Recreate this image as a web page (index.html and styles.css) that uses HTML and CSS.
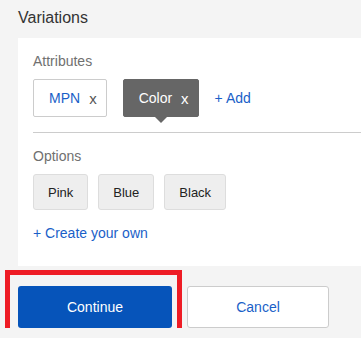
FILE: index.html
```html
<!DOCTYPE html>
<html lang="en">
    <head>
        <meta charset="UTF-8" />
        <meta name="viewport" content="width=device-width, initial-scale=1.0" />
        <title>Variations</title>
        <link rel="stylesheet" href="styles.css">
    </head>
    <body>
        <div id="title">Variations</div>
        <div id="panel">
            <div class="label">Attributes</div>
            <div class="chip-row">
                <div class="attr">MPN <span class="remove">x</span></div>
                <div class="attr active">Color <span class="remove">x</span></div>
                <a class="link" href="#">+ Add</a>
            </div>
            <div class="divider"></div>
            <div class="label">Options</div>
            <div class="chip-row options">
                <div class="option">Pink</div>
                <div class="option">Blue</div>
                <div class="option">Black</div>
            </div>
            <a class="link create" href="#">+ Create your own</a>
        </div>
        <div id="footer">
            <button id="continue">Continue</button>
            <button id="cancel">Cancel</button>
            <div id="highlight"></div>
        </div>
    </body>
</html>
```

FILE: styles.css
```css
body {
    margin: 0;
    background-color: #f4f4f4;
    font-family: "Liberation Sans", Arial, sans-serif;
    color: #333;
}
#title {
    padding: 8px 18px 10px;
    font-size: 16px;
    line-height: 20px;
}
#panel {
    margin-left: 18px;
    background-color: white;
    padding: 15px 0 24px 15px;
}
.label {
    font-size: 14px;
    line-height: 16px;
    color: #707070;
    margin-bottom: 10px;
}
.chip-row {
    display: flex;
    align-items: center;
    gap: 16px;
}
.chip-row.options {
    gap: 10px;
}
.attr {
    position: relative;
    box-sizing: border-box;
    height: 38px;
    display: flex;
    align-items: center;
    padding: 0 9px 0 15px;
    border: 1px solid #ccc;
    border-radius: 2px;
    background-color: #fff;
    color: #1a5fc8;
    font-size: 14px;
}
.attr .remove {
    color: #555;
    margin-left: 9px;
    font-size: 15px;
}
.attr.active {
    background-color: #666;
    border-color: #666;
    color: white;
}
.attr.active .remove {
    color: white;
}
.attr.active::after {
    content: "";
    position: absolute;
    left: 50%;
    bottom: -7px;
    margin-left: -6px;
    border-left: 6px solid transparent;
    border-right: 6px solid transparent;
    border-top: 6px solid #666;
}
.link {
    color: #1a5fc8;
    font-size: 14px;
    text-decoration: none;
}
.divider {
    height: 1px;
    background-color: #ccc;
    margin: 15px 0 15px;
}
.option {
    box-sizing: border-box;
    height: 36px;
    display: flex;
    align-items: center;
    padding: 0 14px;
    background-color: #eee;
    border: 1px solid #ddd;
    border-radius: 3px;
    font-size: 13px;
    color: #222;
}
.create {
    display: block;
    margin-top: 14px;
    font-size: 14px;
    line-height: 18px;
}
#footer {
    position: relative;
    display: flex;
    gap: 15px;
    padding: 20px 18px 0;
}
#footer button {
    box-sizing: border-box;
    height: 42px;
    border-radius: 3px;
    font-family: "Liberation Sans", Arial, sans-serif;
    font-size: 14px;
}
#continue {
    width: 154px;
    background-color: #0654ba;
    border: none;
    color: white;
}
#cancel {
    width: 142px;
    background-color: white;
    border: 1px solid #ccc;
    color: #1a5fc8;
}
#highlight {
    position: absolute;
    left: 5px;
    top: 4px;
    width: 167px;
    height: 54px;
    border: 5px solid #ee1c25;
}
```
